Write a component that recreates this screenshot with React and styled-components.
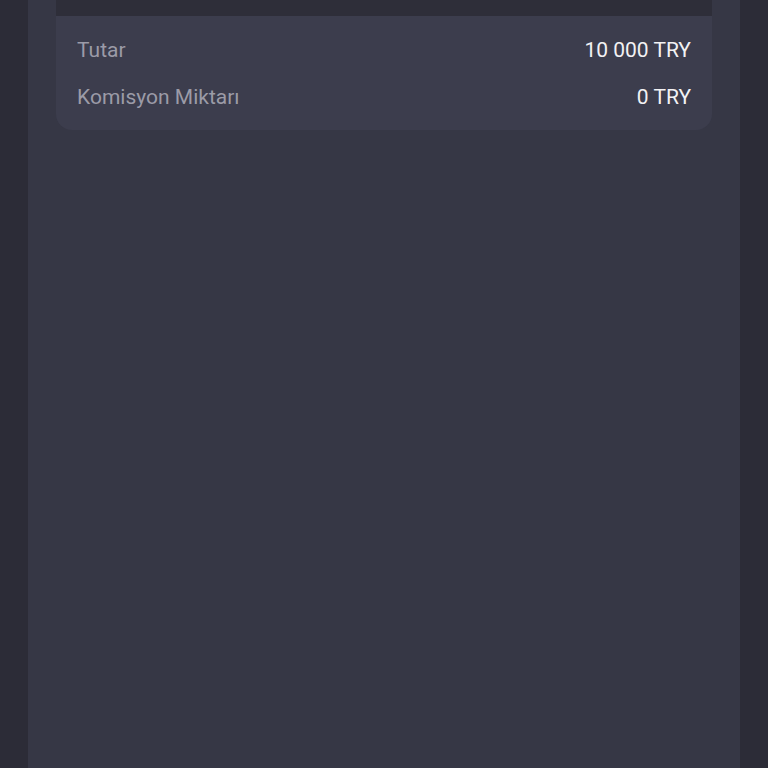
import React from 'react';
import styled, { createGlobalStyle } from 'styled-components';

const GlobalStyle = createGlobalStyle`
  html, body {
    margin: 0;
    padding: 0;
    background: #2c2c37;
  }
  body {
    font-family: Roboto, "Noto Sans", sans-serif;
  }
`;

const Screen = styled.div`
  height: 768px;
  display: flex;
  justify-content: center;
  background: #2c2c37;
  overflow: hidden;
`;

const Panel = styled.div`
  width: 712px;
  background: #363745;
  padding: 0 28px;
  box-sizing: border-box;
`;

const Card = styled.div`
  background: #3c3d4d;
  border-radius: 0 0 16px 16px;
  overflow: hidden;
`;

const TopStrip = styled.div`
  height: 16px;
  background: #2e2e39;
`;

const Rows = styled.div`
  padding: 11px 21px 9px;
`;

const Row = styled.div`
  height: 47px;
  display: flex;
  align-items: center;
  justify-content: space-between;
  font-size: 21px;
  line-height: 1;
`;

const Label = styled.span`
  color: #9b9ba7;
`;

const Value = styled.span`
  color: #f2f2f4;
`;

const rows = [
  { label: 'Tutar', value: '10 000 TRY' },
  { label: 'Komisyon Miktarı', value: '0 TRY' },
];

const App = () => (
  <>
    <GlobalStyle />
    <Screen>
      <Panel>
        <Card>
          <TopStrip />
          <Rows>
            {rows.map((r) => (
              <Row key={r.label}>
                <Label>{r.label}</Label>
                <Value>{r.value}</Value>
              </Row>
            ))}
          </Rows>
        </Card>
      </Panel>
    </Screen>
  </>
);

export default App;
